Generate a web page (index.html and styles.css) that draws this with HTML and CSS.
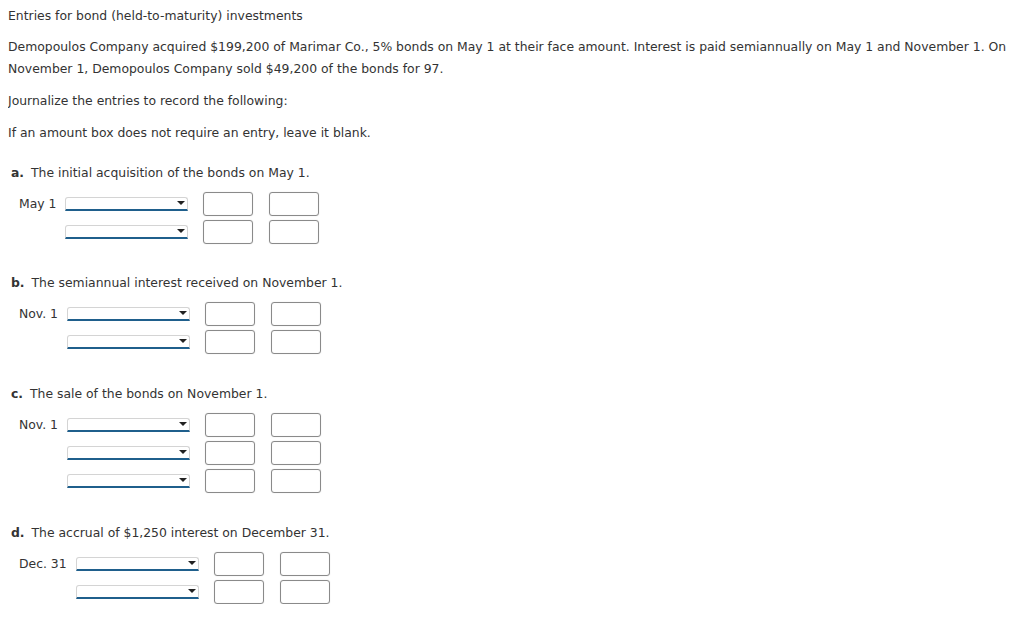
FILE: index.html
```html
<!DOCTYPE html>
<html>
<head>
<meta charset="utf-8">
<link rel="stylesheet" href="styles.css">
</head>
<body>
<p class="title">Entries for bond (held-to-maturity) investments</p>
<p class="para">Demopoulos Company acquired $199,200 of Marimar Co., 5% bonds on May 1 at their face amount. Interest is paid semiannually on May 1 and November 1. On<br>November 1, Demopoulos Company sold $49,200 of the bonds for 97.</p>
<p class="para">Journalize the entries to record the following:</p>
<p class="para">If an amount box does not require an entry, leave it blank.</p>

<section class="part">
  <p class="part-head"><b>a.</b> The initial acquisition of the bonds on May 1.</p>
  <div class="entries">
    <span class="date">May 1</span><span class="sel"></span><span class="amt"></span><span class="amt"></span>
    <span class="date"></span><span class="sel"></span><span class="amt"></span><span class="amt"></span>
  </div>
</section>

<section class="part">
  <p class="part-head"><b>b.</b> The semiannual interest received on November 1.</p>
  <div class="entries">
    <span class="date">Nov. 1</span><span class="sel"></span><span class="amt"></span><span class="amt"></span>
    <span class="date"></span><span class="sel"></span><span class="amt"></span><span class="amt"></span>
  </div>
</section>

<section class="part part-wide">
  <p class="part-head"><b>c.</b> The sale of the bonds on November 1.</p>
  <div class="entries">
    <span class="date">Nov. 1</span><span class="sel"></span><span class="amt"></span><span class="amt"></span>
    <span class="date"></span><span class="sel"></span><span class="amt"></span><span class="amt"></span>
    <span class="date"></span><span class="sel"></span><span class="amt"></span><span class="amt"></span>
  </div>
</section>

<section class="part part-wide">
  <p class="part-head"><b>d.</b> The accrual of $1,250 interest on December 31.</p>
  <div class="entries">
    <span class="date">Dec. 31</span><span class="sel"></span><span class="amt"></span><span class="amt"></span>
    <span class="date"></span><span class="sel"></span><span class="amt"></span><span class="amt"></span>
  </div>
</section>
</body>
</html>
```
FILE: styles.css
```css
body {
  margin: 8px;
  font-family: "DejaVu Sans", Verdana, sans-serif;
  font-size: 12.4px;
  color: #333;
  background: #fff;
}
p { margin: 0; }
.title {
  line-height: 16px;
}
.para {
  line-height: 22px;
  margin-top: 10px;
  white-space: nowrap;
}
.title + .para { margin-top: 12px; }
.part {
  margin-top: 28px;
}
.part-wide { margin-top: 29px; }
.para + .part { margin-top: 18px; }
.part-head {
  line-height: 22px;
  padding-left: 3px;
}
.part-head b {
  font-weight: bold;
  margin-right: 3px;
}
.entries {
  display: grid;
  grid-template-columns: auto 123px auto auto;
  grid-auto-rows: 24px;
  row-gap: 4px;
  align-items: center;
  margin-top: 8px;
  padding-left: 11px;
  width: max-content;
}
.date {
  padding-right: 9px;
  line-height: 16px;
}
.sel {
  position: relative;
  height: 11px;
  border: 1px solid #d4d4d4;
  border-bottom: 2px solid #1f5f8c;
  border-radius: 3px 3px 0 0;
  background: #fff;
}
.sel::after {
  content: "";
  position: absolute;
  right: 2px;
  top: 3px;
  border-left: 4px solid transparent;
  border-right: 4px solid transparent;
  border-top: 4px solid #222;
}
.amt {
  width: 48px;
  height: 22px;
  border: 1px solid #8a8a8a;
  border-radius: 3px;
  box-shadow: 0 0 1px #c8c8c8, inset 0 0 1px #ddd;
  margin-left: 15px;
}
.amt + .amt { margin-left: 16px; }
```
